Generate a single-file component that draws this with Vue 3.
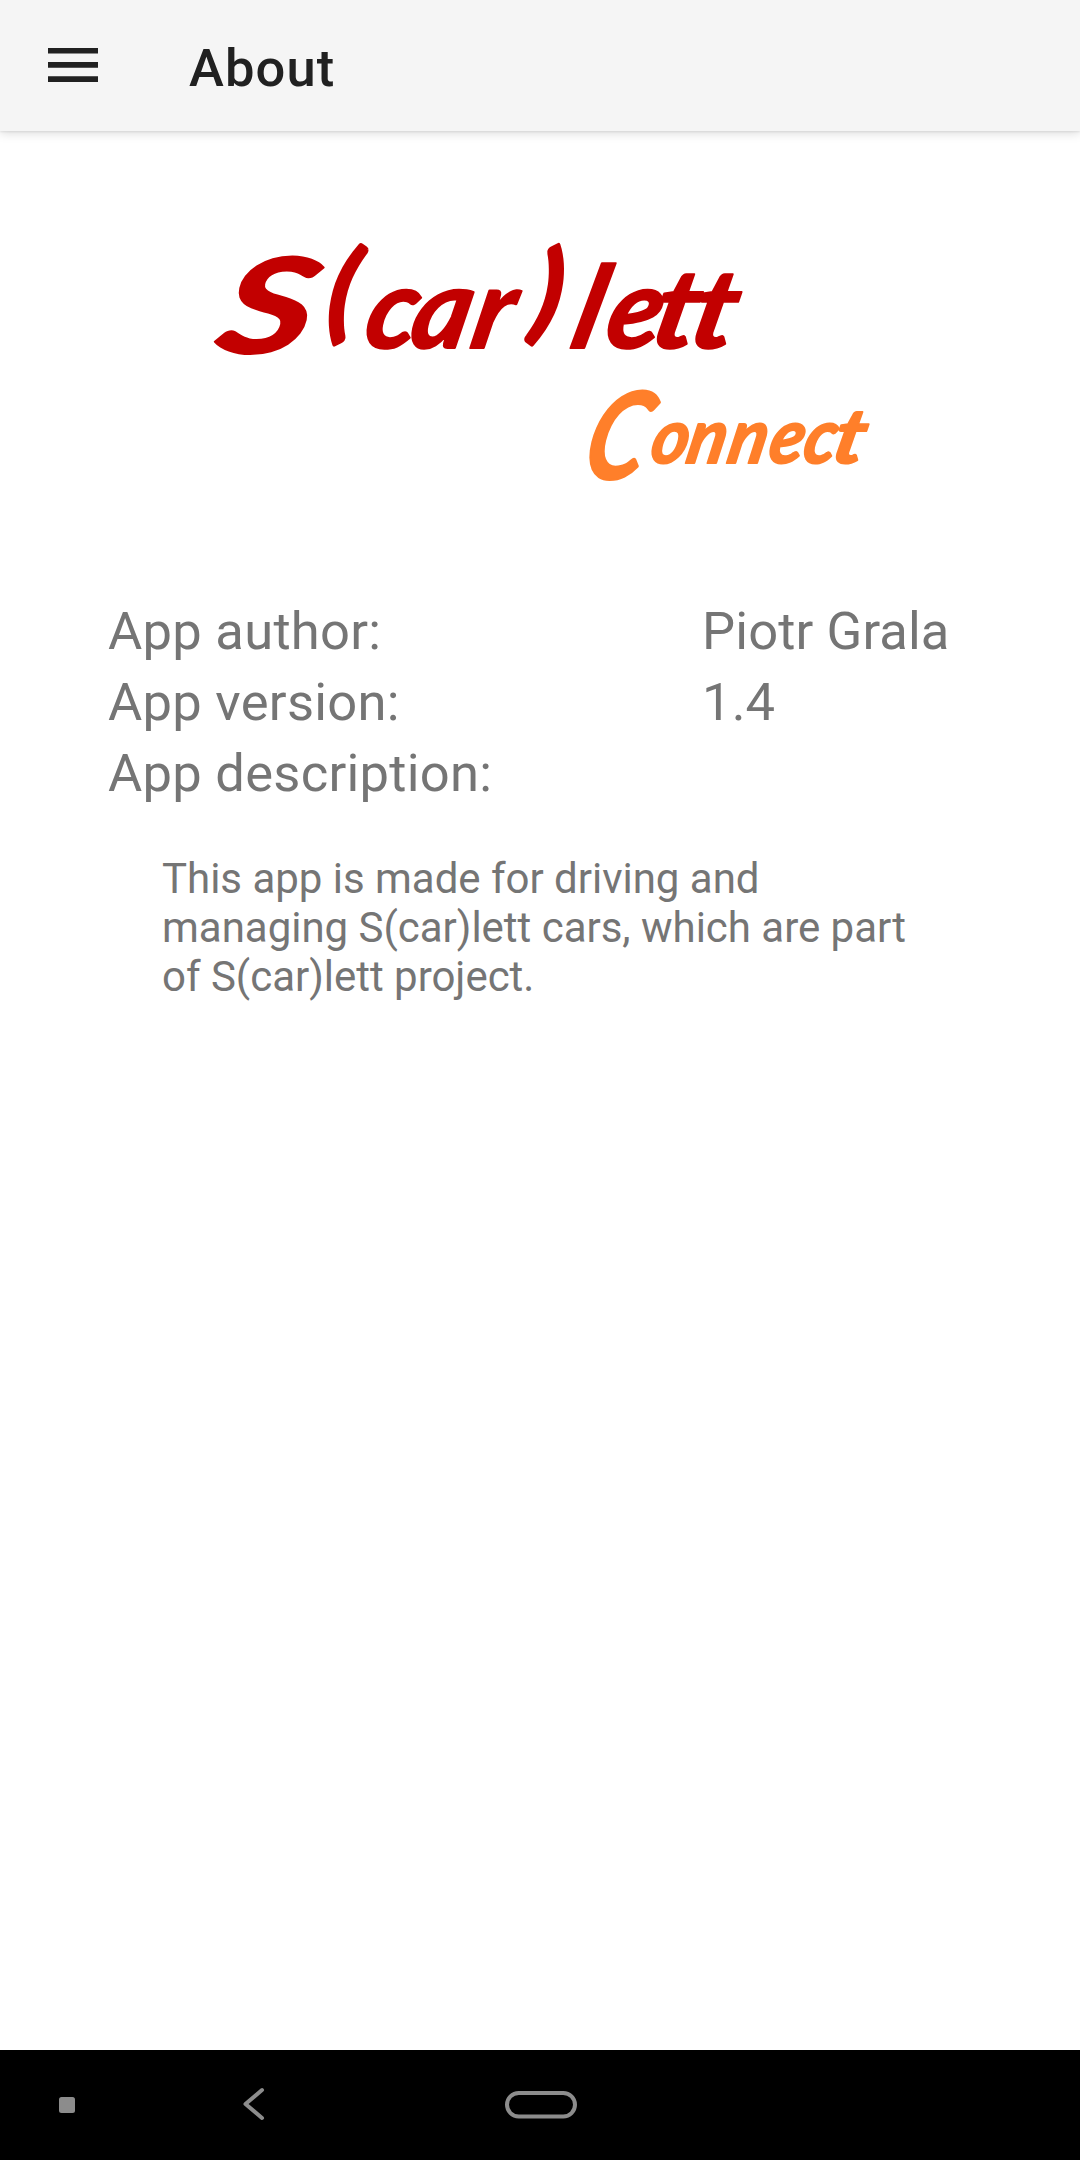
<script setup>
const details = [
  { label: 'App author:', value: 'Piotr Grala' },
  { label: 'App version:', value: '1.4' },
  { label: 'App description:', value: '' },
]
</script>

<template>
  <div class="screen">
    <header class="toolbar">
      <svg class="menu" width="50" height="34" viewBox="0 0 50 34" aria-label="Menu">
        <path d="M0 0H50V5.500H0zM0 14H50V19.700H0zM0 28.200H50V34H0z" fill="#212121" />
      </svg>
      <h1 class="title">About</h1>
    </header>

    <main class="content">
      <svg class="logo" width="720" height="350" viewBox="180 180 720 350">
        <g class="script red">
          <text transform="translate(213 353) skewX(-12) scale(1.37 1)" font-size="132">S</text>
          <text class="paren" transform="translate(325 328) skewX(-8)" font-size="106">(</text>
          <text transform="translate(361 348) skewX(-12)" x="0 46 107" font-size="112">car</text>
          <text class="paren" transform="translate(530 328) skewX(-8)" font-size="106">)</text>
          <text transform="translate(568 348) skewX(-14)" font-size="114">l</text>
          <text transform="translate(602 348) skewX(-12)" font-size="112">e</text>
          <text transform="translate(648 348) skewX(-12) scale(1.1 1)" x="0 35" font-size="110">tt</text>
        </g>
        <g class="script orange">
          <text transform="translate(579 479) skewX(-14) scale(.8 1)" font-size="121">C</text>
          <text transform="translate(648 463) skewX(-12) scale(.93 1)" x="0 39 83 127 164" font-size="76">onnec</text>
          <text transform="translate(830 463) skewX(-12) scale(1.12 1)" font-size="76">t</text>
        </g>
      </svg>

      <dl class="details">
        <div v-for="row in details" :key="row.label" class="row">
          <dt>{{ row.label }}</dt>
          <dd>{{ row.value }}</dd>
        </div>
      </dl>
      <p class="description">
        This app is made for driving and managing S(car)lett cars, which are part of S(car)lett project.
      </p>
    </main>

    <nav class="navbar">
      <svg width="1080" height="110" viewBox="0 0 1080 110" fill="none" stroke="#8c8c8c" stroke-width="4">
        <rect x="59" y="47" width="16" height="16" rx="2.5" fill="#8c8c8c" stroke="none" />
        <path d="M262 40L245.500 54L262 68" stroke-linecap="round" stroke-linejoin="round" />
        <rect x="507" y="43" width="68" height="23.500" rx="11.750" />
      </svg>
    </nav>
  </div>
</template>

<style>
body {
  margin: 0;
  background: #fff;
}
</style>

<style scoped>
.screen {
  display: flex;
  flex-direction: column;
  width: 1080px;
  height: 2160px;
  overflow: hidden;
  background: #fff;
  font-family: Roboto, sans-serif;
  color: #757575;
}

.toolbar {
  display: flex;
  align-items: center;
  box-sizing: border-box;
  height: 131px;
  padding: 0 0 2px 48px;
  background: #f5f5f5;
  box-shadow: 0 2px 10px rgba(0, 0, 0, 0.15), 0 1px 2px rgba(0, 0, 0, 0.08);
}

.title {
  margin: 7px 0 0 91px;
  font-size: 52.5px;
  font-weight: 500;
  line-height: 62px;
  letter-spacing: 1.1px;
  color: #212121;
}

.content {
  display: flex;
  flex: 1;
  flex-direction: column;
}

.logo {
  display: block;
  margin: 49px 0 0 180px;
}

.script {
  font-family: Lato, sans-serif;
  font-style: italic;
  font-weight: 700;
  stroke-width: 2;
  stroke-linejoin: round;
}

.paren {
  stroke-width: 4;
}

.red {
  fill: #c20000;
  stroke: #c20000;
}

.orange {
  fill: #ff7f2a;
  stroke: #ff7f2a;
}

.details {
  margin: 66px 108px 0;
  font-size: 52.5px;
  line-height: 71px;
}

.row {
  display: flex;
}

.row dt {
  width: 594px;
  letter-spacing: 0.28px;
}

.row dd {
  margin: 0;
  letter-spacing: 0.12px;
}

.description {
  width: 756px;
  margin: 45px 0 0 162px;
  font-size: 42px;
  line-height: 49px;
  letter-spacing: -0.02px;
}

.navbar {
  height: 110px;
  background: #000;
}

.navbar svg {
  display: block;
}
</style>
